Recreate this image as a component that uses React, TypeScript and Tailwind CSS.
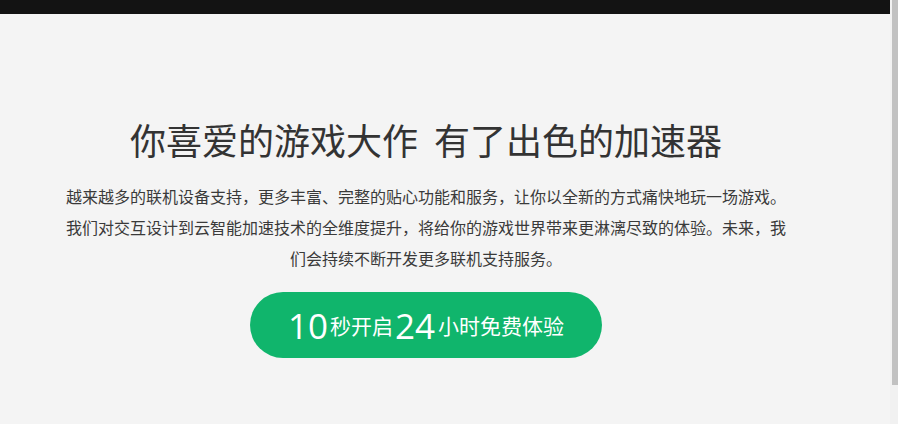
import React from "react";

export default function App() {
  const font = { fontFamily: '"Noto Sans CJK SC", "Noto Sans", sans-serif' };
  const num = { fontFamily: '"Open Sans", "Noto Sans", sans-serif' };
  return (
    <div className="flex h-[424px] w-[898px] overflow-hidden bg-[#f4f4f4]" style={font}>
      <div className="flex w-[890px] flex-col">
        <div className="h-[14px] w-full bg-[#131313]" />
        <div className="flex flex-col items-center pr-[38px]">
          <h1 className="mt-[103px] text-[36px] leading-[44px] font-normal text-[#333333] whitespace-pre">
            你喜爱的游戏大作  有了出色的加速器
          </h1>
          <p className="mt-[20px] w-[760px] text-center text-[16px] leading-[31px] text-[#3a3a3a]">
            越来越多的联机设备支持，更多丰富、完整的贴心功能和服务，让你以全新的方式痛快地玩一场游戏。
            <br />
            我们对交互设计到云智能加速技术的全维度提升，将给你的游戏世界带来更淋漓尽致的体验。未来，我
            <br />
            们会持续不断开发更多联机支持服务。
          </p>
          <div className="mt-[18px] flex h-[66px] w-[352px] items-center justify-center rounded-full bg-[#10b56c] text-white">
            <span className="text-[35px] leading-none" style={num}>10</span>
            <span className="ml-[2px] text-[21px] leading-none">秒开启</span>
            <span className="ml-[2px] text-[35px] leading-none" style={num}>24</span>
            <span className="ml-[3px] text-[21px] leading-none">小时免费体验</span>
          </div>
        </div>
      </div>
      <div className="flex w-[8px] flex-col bg-[#f1f1f1]">
        <div className="ml-[2px] h-[385px] w-[6px] bg-[#c1c1c1]" />
      </div>
    </div>
  );
}
